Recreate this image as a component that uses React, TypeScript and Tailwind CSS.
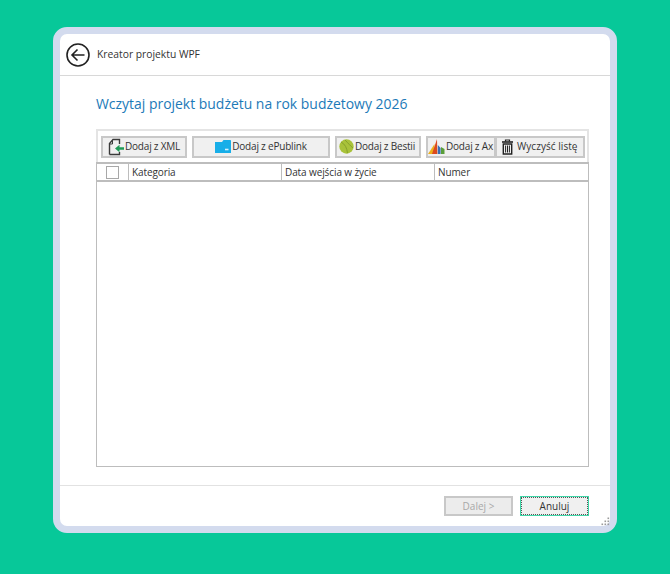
/**
 * Kreator projektu WPF - budget project wizard window
 */

const font = 'font-["Open_Sans","Noto_Sans",sans-serif]';

function XmlIcon() {
  return (
    <svg width="18" height="18" viewBox="0 0 18 18" fill="none">
      <path d="M2.5 16.5V5.5L6 1.5H12.5V6M2.5 16.5H12.5V14" stroke="#3a3a3a" strokeWidth="1.4" />
      <path d="M5.5 2.5V6H2.5" stroke="#3a3a3a" strokeWidth="1" />
      <path d="M17 9.2H12.5V6.8L8 10.5L12.5 14.2V11.8H17Z" fill="#1f9a57" />
    </svg>
  );
}

function FolderIcon() {
  return (
    <svg width="16" height="13" viewBox="0 0 16 13">
      <path d="M0 2H7L8.5 0H15C15.6 0 16 .4 16 1V13H0Z" fill="#18aee8" />
      <path d="M10 9.5H13.5" stroke="#d8f2fc" strokeWidth="1.6" />
    </svg>
  );
}

function BallIcon() {
  return (
    <svg width="15" height="15" viewBox="0 0 15 15">
      <circle cx="7.5" cy="7.5" r="7.2" fill="#a9c23a" />
      <path d="M2 3C6 5 8 9 8.5 14.2M6 1C9 4 11.5 7 14 9" stroke="#86a12a" strokeWidth="1" fill="none" />
    </svg>
  );
}

function AxIcon() {
  return (
    <svg width="17" height="15" viewBox="0 0 17 15">
      <path d="M0 15L6.5 5V15Z" fill="#eeb01c" />
      <path d="M4 15L9 0L9.4 15Z" fill="#dc4a1f" />
      <path d="M9.8 15V6L12.6 9V15Z" fill="#3a6fb5" />
      <path d="M13 15V8L16.5 10V15Z" fill="#5a9e3a" />
    </svg>
  );
}

function TrashIcon() {
  return (
    <svg width="13" height="16" viewBox="0 0 13 16" fill="none" stroke="#222">
      <path d="M1 3H12" strokeWidth="1.6" />
      <path d="M4.5 2.5V1H8.5V2.5" strokeWidth="1.2" />
      <path d="M2.3 5H10.7V15H2.3Z" strokeWidth="1.4" />
      <path d="M4.6 6.5V13.5M6.5 6.5V13.5M8.4 6.5V13.5" strokeWidth="1" />
    </svg>
  );
}

function ToolbarButton({ className, children }: { className: string; children: React.ReactNode }) {
  return (
    <button className={`flex h-[22px] shrink-0 items-center overflow-hidden whitespace-nowrap border-2 border-[#c8c8c8] bg-[#f0f0f0] text-[10px] tracking-[-0.2px] text-[#333] ${className}`}>
      {children}
    </button>
  );
}

export default function App() {
  return (
    <div className={`flex h-[574px] w-[670px] items-start bg-[#07c899] pl-[53px] pt-[27px] ${font}`}>
      <div className="flex h-[506px] w-[564px] flex-col rounded-[14px] border-[7px] border-[#d3dbee] bg-white">
        {/* Header */}
        <div className="flex h-[42px] shrink-0 items-center gap-[7px] border-b border-[#d8d8d8] pl-[6px]">
          <svg width="24" height="24" viewBox="0 0 24 24" fill="none" stroke="#222">
            <circle cx="12" cy="12" r="11" strokeWidth="1.6" />
            <path d="M18.5 12H6.5M11.5 6.5L6 12L11.5 17.5" strokeWidth="1.6" />
          </svg>
          <span className="text-[10.3px] text-[#333]">Kreator projektu WPF</span>
        </div>

        {/* Content */}
        <div className="flex min-h-0 flex-1 flex-col pl-9 pr-[21px]">
          <h1 className="mt-[17px] h-[22px] text-[13.95px] leading-[22px] font-normal text-[#1c7ab8]">
            Wczytaj projekt budżetu na rok budżetowy 2026
          </h1>

          <div className="mt-[14px] flex h-[33px] shrink-0 items-center border-2 border-b-0 border-[#e4e4e4] pl-[3px]">
            <ToolbarButton className="w-[86px] gap-[0px] pl-[4px]">
              <XmlIcon />
              Dodaj z XML
            </ToolbarButton>
            <ToolbarButton className="ml-[5px] w-[138px] justify-center gap-[1px]">
              <FolderIcon />
              Dodaj z ePublink
            </ToolbarButton>
            <ToolbarButton className="ml-[5px] w-[86px] gap-[1px] pl-[2px]">
              <BallIcon />
              Dodaj z Bestii
            </ToolbarButton>
            <ToolbarButton className="ml-[5px] w-[70px] gap-[1px]">
              <AxIcon />
              Dodaj z Ax
            </ToolbarButton>
            <ToolbarButton className="-ml-[1px] w-[90px] gap-[3px] pl-[4px]">
              <TrashIcon />
              <span className="tracking-[0.05px]">Wyczyść listę</span>
            </ToolbarButton>
          </div>

          {/* Grid */}
          <div className="flex h-[305px] shrink-0 flex-col border border-t-2 border-[#bdbdbd]">
            <div className="flex h-[18px] shrink-0 border-b-2 border-[#bdbdbd] text-[10px] tracking-[-0.1px] leading-[16px] text-[#333]">
              <div className="flex w-[32px] items-center justify-center border-r border-[#bdbdbd] pr-[1px]">
                <div className="h-[13px] w-[13px] border border-[#a8a8a8] bg-white" />
              </div>
              <div className="w-[153px] border-r border-[#bdbdbd] pl-[3px]">Kategoria</div>
              <div className="w-[153px] border-r border-[#bdbdbd] pl-[3px]">Data wejścia w życie</div>
              <div className="flex-1 pl-[3px]">Numer</div>
            </div>
          </div>
        </div>

        {/* Footer */}
        <div className="relative flex h-[41px] shrink-0 items-start justify-end gap-[7px] border-t border-[#e2e2e2] pt-[10px] pr-[21px]">
          <button disabled className="h-[20px] w-[69px] border-2 border-[#c8c8c8] bg-[#ececec] text-[10px] leading-[16px] text-[#a8a8a8]">
            Dalej &gt;
          </button>
          <button className="flex h-[20px] w-[69px] items-center justify-center border border-[#3fd6a8] bg-[#f0f0f0] text-[10px] text-[#333] outline-1 -outline-offset-2 outline-dotted outline-[#555]">
            Anuluj
          </button>
          {/* Resize grip */}
          <svg className="absolute right-0 bottom-0" width="9" height="9" viewBox="0 0 9 9" fill="#9a9a9a">
            <rect x="6.5" y="0.5" width="1.6" height="1.6" />
            <rect x="3.5" y="3.5" width="1.6" height="1.6" />
            <rect x="6.5" y="3.5" width="1.6" height="1.6" />
            <rect x="0.5" y="6.5" width="1.6" height="1.6" />
            <rect x="3.5" y="6.5" width="1.6" height="1.6" />
            <rect x="6.5" y="6.5" width="1.6" height="1.6" />
          </svg>
        </div>
      </div>
    </div>
  );
}
